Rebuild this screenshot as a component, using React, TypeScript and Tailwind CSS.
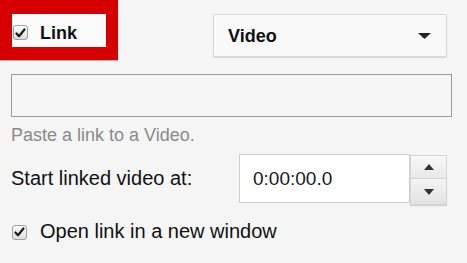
import React from "react";

function Check() {
  return (
    <div className="w-[15px] h-[15px] shrink-0 rounded-[3px] border border-[#a0a0a0] bg-gradient-to-b from-[#fdfdfd] to-[#dcdcdc] flex items-center justify-center shadow-[inset_0_1px_0_rgba(255,255,255,0.8)]">
      <svg width="11" height="10" viewBox="0 0 11 10">
        <path d="M1.5 5.5 L4 8.2 L9.5 1.5" fill="none" stroke="#1a1a1a" strokeWidth="2.2" strokeLinecap="round" strokeLinejoin="round" />
      </svg>
    </div>
  );
}

export default function App() {
  return (
    <div
      className="w-[467px] h-[263px] bg-[#f5f5f5] overflow-hidden text-[#111]"
      style={{ fontFamily: '"Liberation Sans", Arial, Helvetica, sans-serif' }}
    >
      <div className="flex items-start">
        <div className="w-[118px] h-[60px] border-x-[12px] border-t-[14px] border-b-[13px] border-[#d60000] shadow-[0_1px_1px_rgba(0,0,0,0.25)]">
          <div className="w-full h-full bg-[#fbfbfb] flex items-center pt-[4px] pl-[1px]">
            <Check />
            <span className="ml-[12px] text-[18px] leading-[20px] font-bold">Link</span>
          </div>
        </div>
        <div className="ml-[95px] mt-[14px] w-[234px] h-[43px] bg-[#f9f9f9] border border-[#d8d8d8] rounded-[2px] shadow-[0_1px_1px_rgba(0,0,0,0.12)] flex items-center justify-between pl-[14px] pr-[15px]">
          <span className="text-[18px] leading-[20px] font-bold">Video</span>
          <svg width="13" height="6" viewBox="0 0 13 6">
            <path d="M0 0 L13 0 L6.5 6 Z" fill="#222" />
          </svg>
        </div>
      </div>
      <div className="ml-[11px] mt-[14px] w-[441px] h-[43px] bg-[#f6f6f6] border border-[#9c9c9c]" />
      <div className="ml-[11px] mt-[8px] text-[18px] leading-[20px] text-[#8a8a8a]">Paste a link to a Video.</div>
      <div className="flex items-start mt-[9px]">
        <div className="ml-[11px] w-[228px] mt-[13px] text-[20px] leading-[23px]">Start linked video at:</div>
        <div className="w-[171px] h-[49px] bg-white border border-[#cfcfcf] flex items-center pl-[13px] text-[19px] leading-[22px] text-[#1a1a1a]">
          0:00:00.0
        </div>
        <div className="flex flex-col mt-[1px] w-[37px]">
          <div className="h-[24px] border border-[#d6d6d6] bg-gradient-to-b from-[#f8f8f8] to-[#e8e8e8] flex items-center justify-center">
            <svg width="10" height="6" viewBox="0 0 10 6">
              <path d="M5 0 L10 6 L0 6 Z" fill="#333" />
            </svg>
          </div>
          <div className="h-[27px] -mt-[1px] border border-[#d6d6d6] bg-gradient-to-b from-[#f4f4f4] to-[#e2e2e2] shadow-[0_1px_1px_rgba(0,0,0,0.15)] flex items-center justify-center">
            <svg width="10" height="6" viewBox="0 0 10 6">
              <path d="M0 0 L10 0 L5 6 Z" fill="#333" />
            </svg>
          </div>
        </div>
      </div>
      <div className="flex items-center mt-[15px] ml-[12px]">
        <div className="mt-[1px]">
          <Check />
        </div>
        <span className="ml-[13px] text-[20px] leading-[23px]">Open link in a new window</span>
      </div>
    </div>
  );
}
